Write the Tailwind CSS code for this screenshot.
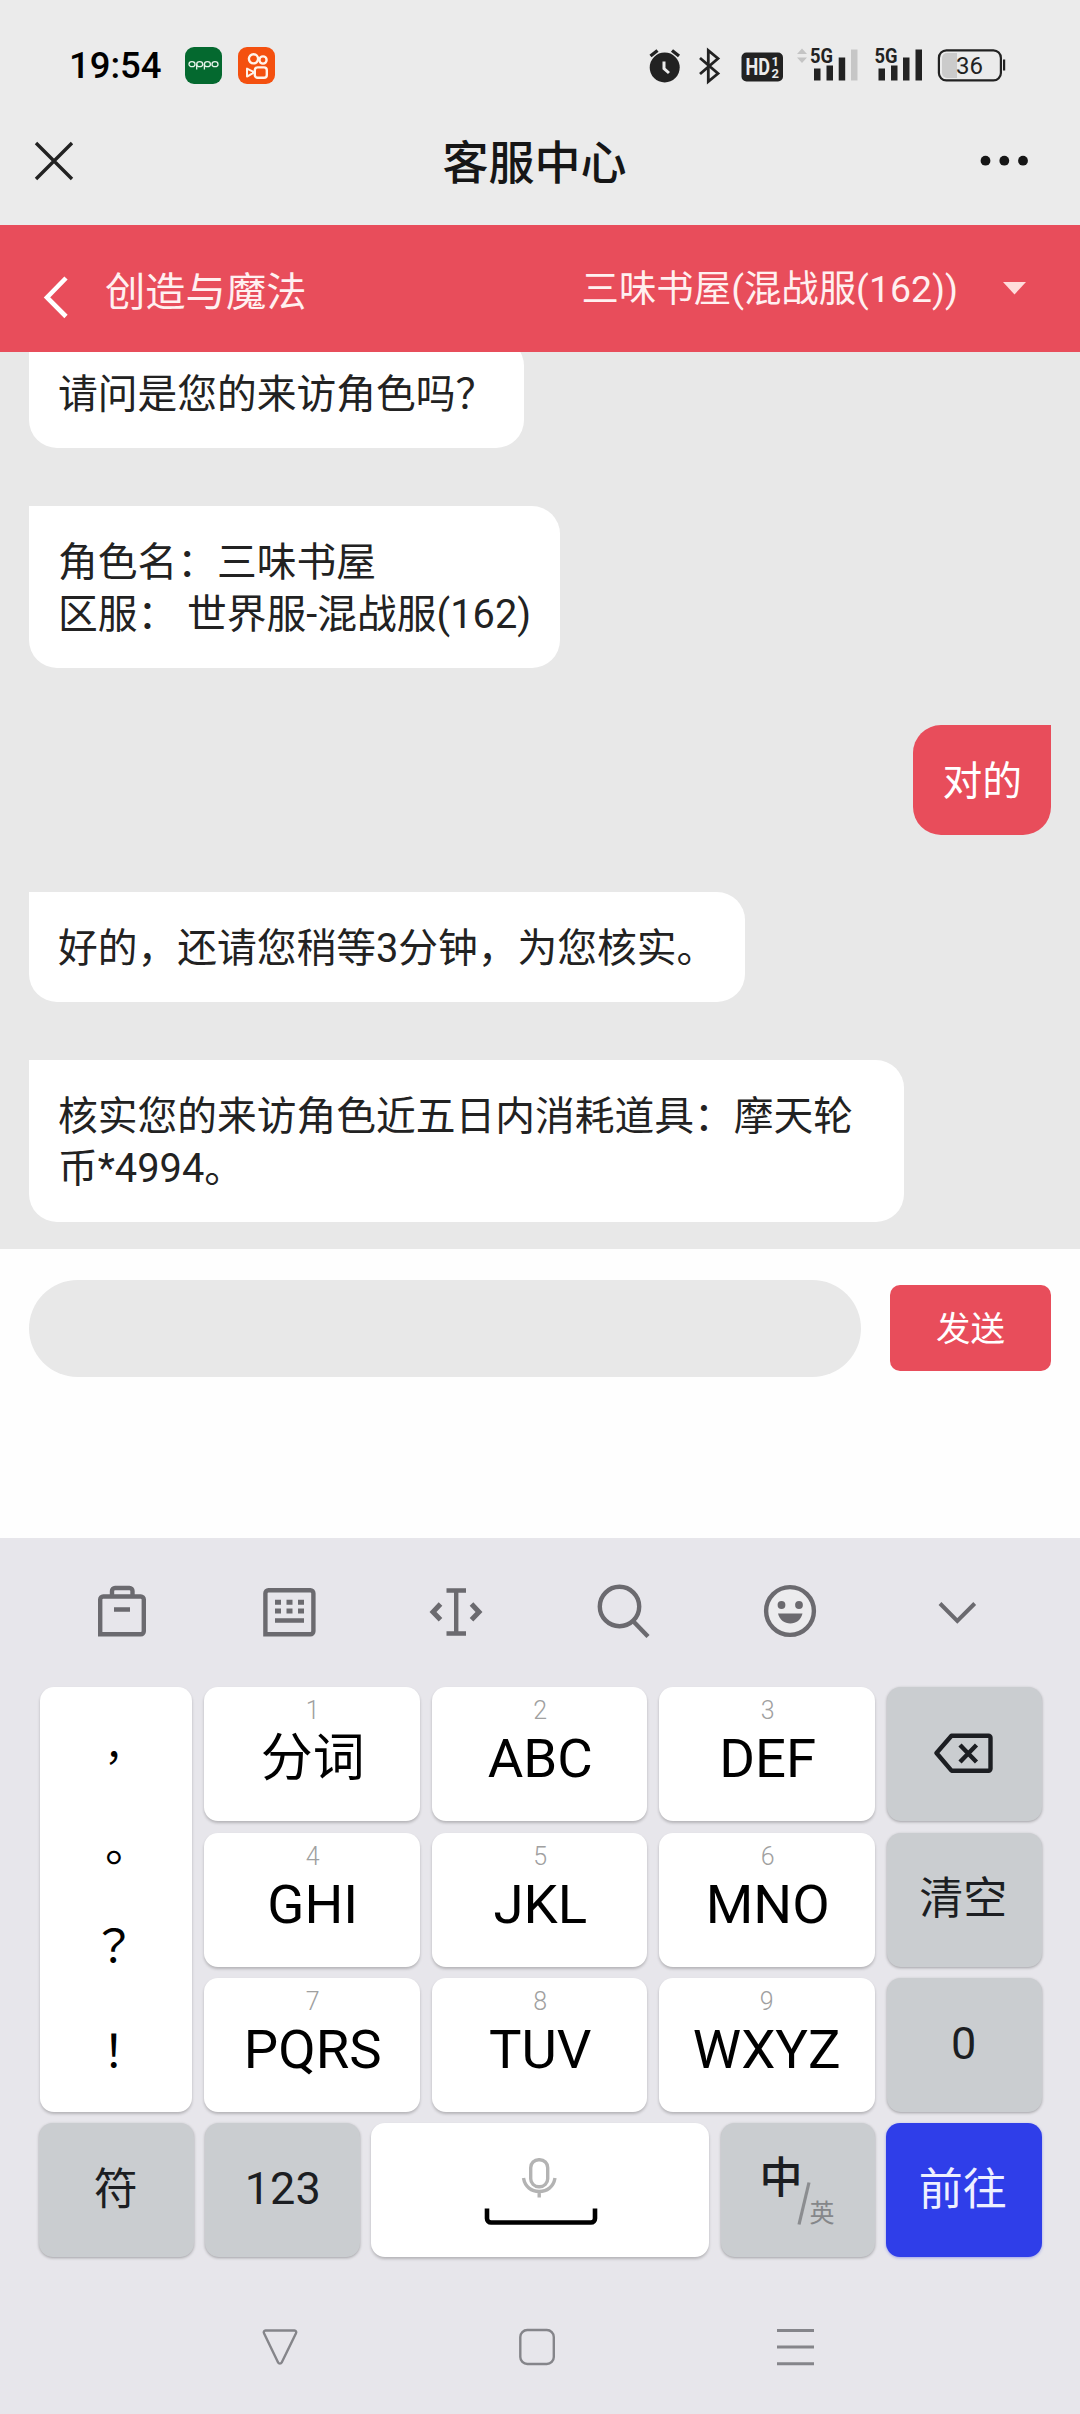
<!DOCTYPE html>
<html lang="zh-CN">
<head>
<meta charset="utf-8">
<title>客服中心</title>
<script src="https://cdn.jsdelivr.net/npm/@tailwindcss/browser@4"></script>
</head>
<body class="w-[1080px] h-[2414px] overflow-hidden flex flex-col bg-[#ebebeb] font-['Roboto','Noto_Sans_CJK_SC',sans-serif] text-[#222]">

<!-- Status bar -->
<div class="h-[97px] shrink-0 pt-[33px] pl-[69px] pr-[75px] flex items-center justify-between">
  <div class="flex items-center">
    <span class="w-[116px] pt-[2px] text-[36.500px] leading-[44px] font-medium text-black">19:54</span>
    <div class="w-[37px] h-[37px] rounded-[9px] bg-[#04692f] flex items-center justify-center">
      <svg width="31" height="11" viewBox="0 0 31 11" fill="none" stroke="#e6f3ea" stroke-width="1.300"><ellipse cx="4" cy="4.200" rx="3" ry="2.500"/><ellipse cx="11.700" cy="4.200" rx="3" ry="2.500"/><path d="M8.700 4v5.500M16.400 4v5.500"/><ellipse cx="19.400" cy="4.200" rx="3" ry="2.500"/><ellipse cx="27" cy="4.200" rx="3" ry="2.500"/></svg>
    </div>
    <div class="ml-4 w-[37px] h-[37px] rounded-[9px] bg-[#f4500f]">
      <svg width="37" height="37" viewBox="0 0 37 37" fill="none" stroke="#fff3ea" stroke-width="2.400"><circle cx="15.500" cy="11.800" r="4.600"/><circle cx="25" cy="13" r="3.600"/><rect x="16.800" y="20.400" width="12" height="10.400" rx="2.800"/><path d="M9 21.600v8l6-3.400v-1.600z" stroke-linejoin="round" stroke-width="2"/></svg>
    </div>
  </div>
  <svg width="356" height="40" viewBox="649 44.500 356 40" class="overflow-visible" font-family="Roboto,sans-serif">
    <circle cx="664.700" cy="67" r="15" fill="#222"/><path d="M650.500 55.500l7-5.500M679 55.500l-7-5.500" stroke="#222" stroke-width="3.400"/><path d="M664 61v7l5 4.500" fill="none" stroke="#ebebeb" stroke-width="3"/>
    <path d="M700 57.500l18 15.500-9.700 8V50l9.700 8-18 15.500" fill="none" stroke="#222" stroke-width="2.800"/>
    <rect x="741.500" y="52" width="41.500" height="29" rx="5" fill="#222"/>
    <g fill="#ebebeb" font-weight="700"><text x="745.500" y="74.500" font-size="23" textLength="24.500" lengthAdjust="spacingAndGlyphs">HD</text><text x="771.500" y="65" font-size="13">1</text><text x="771.500" y="77.500" font-size="13">2</text></g>
    <path d="M797 53.500l5-5.500 5 5.500zM797 57l5 5.500 5-5.500z" fill="#c4c4c4"/>
    <g fill="#222"><text x="810" y="62.500" font-size="21" font-weight="700" textLength="23" lengthAdjust="spacingAndGlyphs">5G</text><text x="874.500" y="62.500" font-size="21" font-weight="700" textLength="23" lengthAdjust="spacingAndGlyphs">5G</text>
    <path d="M814 68h6.500v12H814zM826.500 65h6.500v15h-6.500zM838.700 57h6.500v23h-6.500zM878.500 68h6.500v12h-6.500zM891 65h6.500v15H891zM903 57h6.500v23H903zM915.500 49h6.500v31h-6.500z"/></g>
    <path d="M851 49h6.500v31H851z" fill="#c6c6c6"/>
    <path d="M947 52.500h10v25h-10a5 5 0 0 1-5-5v-15a5 5 0 0 1 5-5z" fill="#cbcbcb"/>
    <rect x="938.900" y="49.900" width="62" height="30" rx="7.500" fill="none" stroke="#222" stroke-width="2.200"/><rect x="1003" y="59" width="2.200" height="11" fill="#222"/>
    <text x="969.500" y="73.500" font-size="24" text-anchor="middle" fill="#222">36</text>
  </svg>
</div>

<!-- Page title -->
<div class="h-[128px] shrink-0 pl-[34px] pr-[52px] flex items-center justify-between">
  <svg width="40" height="40" viewBox="0 0 40 40" stroke="#222" stroke-width="3.400"><path d="M2 2l36 36M38 2L2 38"/></svg>
  <h1 class="text-[46px] leading-[64px] font-medium text-[#161616] pt-[4px] pl-[15px]">客服中心</h1>
  <svg width="48" height="12" viewBox="0 0 48 12" fill="#161616"><circle cx="5.500" cy="5.700" r="4.900"/><circle cx="24.300" cy="5.700" r="4.900"/><circle cx="43" cy="5.700" r="4.900"/></svg>
</div>

<!-- Conversation header -->
<div class="h-[127px] shrink-0 bg-[#e84d5b] text-[#fff0f0] flex items-center pl-[43px] pr-[54px]">
  <svg class="mt-[16px]" width="26" height="44" viewBox="0 0 26 44" fill="none" stroke="#fff" stroke-width="4.600"><path d="M23 3L4 22.500 23 41.500"/></svg>
  <span class="ml-[36px] mt-[8px] text-[40.300px] leading-[48px]">创造与魔法</span>
  <span class="ml-auto mt-px text-[37.400px] leading-[48px]">三味书屋(混战服(162))</span>
  <svg class="ml-[45px]" width="23" height="13" viewBox="0 0 23 13" fill="#ffdcdc"><path d="M0 0h23L11.500 12.500z"/></svg>
</div>

<!-- Messages -->
<div class="h-[897px] shrink-0 overflow-hidden bg-[#e8e8e8] px-[29px] pb-[27.500px] flex flex-col justify-end gap-[57.300px] items-start text-[39.750px] leading-[52px]">
  <div class="shrink-0 bg-white rounded-[28px] rounded-tl-none px-[29px] pt-[31px] pb-[27px]">请问是您的来访角色吗？</div>
  <div class="shrink-0 bg-white rounded-[28px] rounded-tl-none px-[29px] pt-[31px] pb-[27px]">角色名：三味书屋<br>区服： 世界服-混战服(162)</div>
  <div class="shrink-0 self-end bg-[#e84d5b] text-white rounded-[28px] rounded-tr-none px-[29px] pt-[31px] pb-[27px]">对的</div>
  <div class="shrink-0 bg-white rounded-[28px] rounded-tl-none px-[29px] pt-[31px] pb-[27px]">好的，还请您稍等3分钟，为您核实。</div>
  <div class="shrink-0 bg-white rounded-[28px] rounded-tl-none px-[29px] pt-[31px] pb-[27px] w-[874.500px]">核实您的来访角色近五日内消耗道具：摩天轮币*4994。</div>
</div>

<!-- Composer -->
<div class="h-[289px] shrink-0 bg-[#fefefe] pt-[30.500px] px-[29px] flex items-start justify-between">
  <div class="w-[832px] h-[97px] rounded-full bg-[#e8e8e8]"></div>
  <button class="mt-[5px] w-[161px] h-[86px] rounded-[10px] bg-[#e84d5b] text-white text-[34.500px] leading-[46px] pt-[2px]">发送</button>
</div>

<!-- Keyboard -->
<div class="grow bg-[#e7e6eb] flex flex-col">
  <div class="h-[149px] shrink-0 pb-[4px] pl-[38.500px] pr-[39.500px] grid grid-cols-6 items-center justify-items-center text-[#6b6a6f]">
    <svg width="54" height="54" viewBox="0 0 54 54" fill="none" stroke="currentColor" stroke-width="4.400"><path d="M5.200 50.300V15.500a3 3 0 0 1 3-3h37.600a3 3 0 0 1 3 3v31.800a3 3 0 0 1-3 3zM17 12V7a3 3 0 0 1 3-3h14.500a3 3 0 0 1 3 3v5M19 25.500h16"/></svg>
    <svg width="54" height="54" viewBox="0 0 54 54" fill="none" stroke="currentColor" stroke-width="4.400"><path d="M3.400 50.300V9.200a3 3 0 0 1 3-3h42a3 3 0 0 1 3 3v38.100a3 3 0 0 1-3 3zM13 36.500h29"/><path d="M13 18.300h6m5.500 0h6m5.500 0h6M13 27h6m5.500 0h6m5.500 0h6" stroke-width="5"/></svg>
    <svg width="54" height="54" viewBox="0 0 54 54" fill="none" stroke="currentColor" stroke-width="4.400"><path d="M17.500 6.500h19.500M17.500 49.500h19.500M27.200 6v43.500"/><path d="M11.500 20L4 28l7.500 7.700M42.500 20l7.500 8-7.500 7.700" stroke-width="5"/></svg>
    <svg width="54" height="54" viewBox="0 0 54 54" fill="none" stroke="currentColor" stroke-width="4.400"><circle cx="23.500" cy="22.500" r="19.700"/><path d="M37 37l15 15.500"/></svg>
    <svg width="54" height="54" viewBox="0 0 54 54"><circle cx="27" cy="27" r="23.900" fill="#ececee" stroke="currentColor" stroke-width="4.400"/><circle cx="18.500" cy="21" r="3.900" fill="currentColor"/><circle cx="36" cy="21" r="3.900" fill="currentColor"/><path d="M15 29.500h24.500c-1.500 6.500-6.500 10-12.200 10S16.500 36 15 29.500z" fill="currentColor"/></svg>
    <svg width="54" height="54" viewBox="0 0 54 54" fill="none" stroke="currentColor" stroke-width="4"><path d="M10 19.500L27.300 37 44.700 19.500"/></svg>
  </div>

  <div class="pl-[39.500px] grid grid-cols-[152.500px_215.500px_215.500px_215.500px_155.500px] grid-rows-[134px_134px_134px] gap-x-[12px] gap-y-[11.500px] text-center text-[54.500px] leading-[64px] text-black">
    <div class="row-span-3 rounded-[14px] bg-white shadow-[0_2px_3px_rgba(0,0,0,0.220)] flex flex-col items-center pt-[46px] pr-[4px] text-[45px] leading-[44px] font-['Noto_Sans_CJK_TC',sans-serif]" lang="zh-TW">
      <span class="h-[101px] text-[40px]">，</span><span class="h-[88px]">。</span><span class="h-[105px]">？</span><span>！</span>
    </div>
    <div class="rounded-[14px] bg-white shadow-[0_2px_3px_rgba(0,0,0,0.220)] pt-[10px] pl-[2px]"><div class="pb-px text-[25px] leading-[28px] font-light text-[#a0a0a0]">1</div><div class="pt-px text-[52px]">分词</div></div>
    <div class="rounded-[14px] bg-white shadow-[0_2px_3px_rgba(0,0,0,0.220)] pt-[10px] pl-[2px]"><div class="pb-px text-[25px] leading-[28px] font-light text-[#a0a0a0]">2</div>ABC</div>
    <div class="rounded-[14px] bg-white shadow-[0_2px_3px_rgba(0,0,0,0.220)] pt-[10px] pl-[2px]"><div class="pb-px text-[25px] leading-[28px] font-light text-[#a0a0a0]">3</div>DEF</div>
    <div class="rounded-[14px] bg-[#cacdd0] shadow-[0_1px_3px_rgba(0,0,0,0.300)] flex items-center justify-center">
      <svg width="60" height="42" viewBox="0 0 60 42" fill="none" stroke="#1c1e22" stroke-width="4.400"><path d="M2.500 20L17.500 2.700h37a2 2 0 0 1 2 2v31a2 2 0 0 1-2 2h-37z" stroke-linejoin="round"/><path d="M26 12L42.500 29M42.500 12L26 29"/></svg>
    </div>
    <div class="rounded-[14px] bg-white shadow-[0_2px_3px_rgba(0,0,0,0.220)] pt-[10px] pl-[2px]"><div class="pb-px text-[25px] leading-[28px] font-light text-[#a0a0a0]">4</div>GHI</div>
    <div class="rounded-[14px] bg-white shadow-[0_2px_3px_rgba(0,0,0,0.220)] pt-[10px] pl-[2px]"><div class="pb-px text-[25px] leading-[28px] font-light text-[#a0a0a0]">5</div>JKL</div>
    <div class="rounded-[14px] bg-white shadow-[0_2px_3px_rgba(0,0,0,0.220)] pt-[10px] pl-[2px]"><div class="pb-px text-[25px] leading-[28px] font-light text-[#a0a0a0]">6</div>MNO</div>
    <div class="rounded-[14px] bg-[#cacdd0] shadow-[0_1px_3px_rgba(0,0,0,0.300)] flex items-center justify-center pb-[2px] pr-[2px] text-[44px] text-[#1c1e22]">清空</div>
    <div class="rounded-[14px] bg-white shadow-[0_2px_3px_rgba(0,0,0,0.220)] pt-[10px] pl-[2px]"><div class="pb-px text-[25px] leading-[28px] font-light text-[#a0a0a0]">7</div>PQRS</div>
    <div class="rounded-[14px] bg-white shadow-[0_2px_3px_rgba(0,0,0,0.220)] pt-[10px] pl-[2px]"><div class="pb-px text-[25px] leading-[28px] font-light text-[#a0a0a0]">8</div>TUV</div>
    <div class="rounded-[14px] bg-white shadow-[0_2px_3px_rgba(0,0,0,0.220)] pt-[10px]"><div class="pb-px text-[25px] leading-[28px] font-light text-[#a0a0a0]">9</div>WXYZ</div>
    <div class="rounded-[14px] bg-[#cacdd0] shadow-[0_1px_3px_rgba(0,0,0,0.300)] flex items-center justify-center pb-[3px] pr-px text-[45px] text-[#1c1e22]">0</div>
  </div>

  <div class="mt-[11px] h-[134px] shrink-0 pl-[38.500px] flex text-[44px] leading-[64px] text-[#1c1e22]">
    <div class="w-[155.500px] rounded-[14px] bg-[#cacdd0] shadow-[0_1px_3px_rgba(0,0,0,0.300)] flex items-center justify-center pr-px">符</div>
    <div class="ml-[11px] w-[154.500px] rounded-[14px] bg-[#cacdd0] shadow-[0_1px_3px_rgba(0,0,0,0.300)] flex items-center justify-center pb-[3px] pl-px text-[45px]">123</div>
    <div class="ml-[11px] w-[338.500px] rounded-[14px] bg-white shadow-[0_2px_3px_rgba(0,0,0,0.220)] flex flex-col items-center pt-[33px] pl-[2px]">
      <svg width="114" height="70" viewBox="0 0 114 70" fill="none"><g stroke="#b3b3b3" stroke-width="3.400"><rect x="46.700" y="3.700" width="17" height="27" rx="8"/><path d="M39.500 22c1.500 9 8 13.500 15.700 13.500S69.500 31 71 22M55.200 35.500v6"/></g><path d="M3 52.500v10a4 4 0 0 0 4 4h100a4 4 0 0 0 4-4v-10" stroke="#000" stroke-width="4.600"/></svg>
    </div>
    <div class="ml-[11.500px] w-[154.500px] rounded-[14px] bg-[#cacdd0] shadow-[0_1px_3px_rgba(0,0,0,0.300)] flex pl-[39px]">
      <span class="pt-[23px] text-[43px] font-medium">中</span>
      <svg class="mt-[58px] -ml-[6px]" width="14" height="46" viewBox="0 0 14 46" stroke="#8b8d90" stroke-width="3.200"><path d="M12 1.500L2 43.500"/></svg>
      <span class="pt-[59px] -ml-px text-[25px] text-[#85878a]">英</span>
    </div>
    <div class="ml-[11px] w-[155.500px] rounded-[14px] bg-[#2f3ee9] shadow-[0_1px_3px_rgba(47,62,233,0.400)] flex items-center justify-center pr-[2px] text-[#eef0ff]">前往</div>
  </div>

  <!-- System navigation -->
  <div class="grow flex items-center pt-[22px] pl-[261.500px] gap-[221.500px]">
    <svg width="36" height="38" viewBox="0 0 36 38" fill="none" stroke="#85858a" stroke-width="2.400" stroke-linejoin="round"><path d="M3.500 2.500h29a1.800 1.800 0 0 1 1.500 2.700L19.700 34.500a2 2 0 0 1-3.600 0L2 5.200a1.800 1.800 0 0 1 1.500-2.700z"/></svg>
    <svg width="36" height="38" viewBox="0 0 36 38" fill="none" stroke="#85858a" stroke-width="2.400"><rect x="1.300" y="2" width="33.500" height="34" rx="7"/></svg>
    <svg width="37" height="38" viewBox="0 0 37 38" fill="none" stroke="#85858a" stroke-width="3"><path d="M0 2.500h37M0 19h37M0 35.700h37"/></svg>
  </div>
</div>
</body>
</html>
